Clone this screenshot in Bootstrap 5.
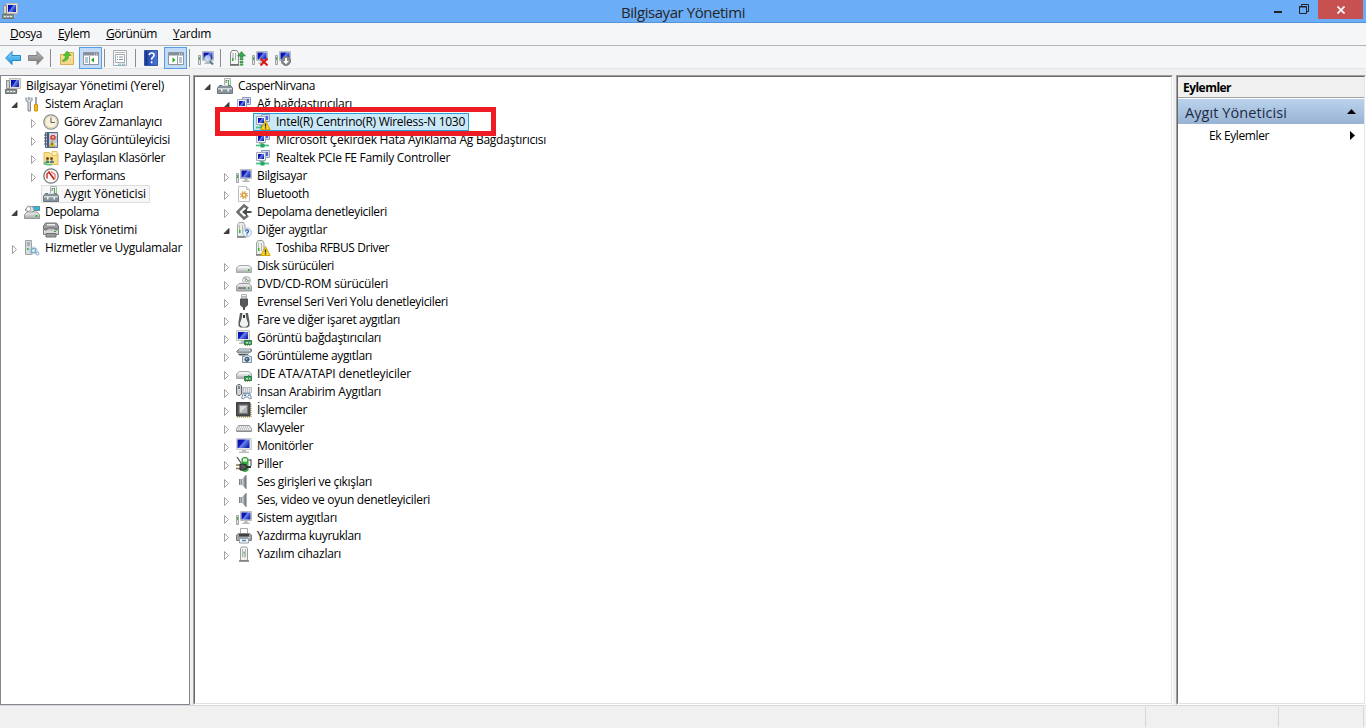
<!DOCTYPE html>
<html lang="tr">
<head>
<meta charset="utf-8">
<title>Bilgisayar Yönetimi</title>
<link href="https://cdn.jsdelivr.net/npm/bootstrap@5.3.0/dist/css/bootstrap.min.css" rel="stylesheet">
<style>
body{font-family:"Open Sans","Noto Sans",sans-serif;font-size:12px;line-height:18px;color:#000;background:#f0f0f0;height:728px;width:1366px}
svg{display:block;flex:none}
.fit{white-space:nowrap;display:inline-block}
.title-bar{height:23px;background:#6badf6;border-bottom:1px solid #5593d6}
.title-bar .caption{font-size:15px;line-height:24px;color:#262626;padding-left:621px}
.app-icon{left:2px;top:3px}
.win-min{width:8px;height:2px;background:#222;margin:11px 17px 0 0}
.win-restore{margin:4px 9px 0 0}
.win-close{width:45px;height:19px;background:#c75050;margin-right:3px}
.menu-bar{height:23px;background:#f5f6f7;border-bottom:1px solid #b1b4b9;padding-left:10px;gap:16px;line-height:22px}
.tool-bar{height:23px;background:#f5f6f7;border-bottom:1px solid #e4e7ea;padding:1px 0 0 5px}
.tool-sep{width:1px;height:18px;background:#8d8d8d}
.tool-toggle{width:23px;height:22px;background:#c2dcf7;border:1px solid #569de5}
.s2{margin-left:2px}.s4{margin-left:4px}.s5{margin-left:5px}.s6{margin-left:6px}.s7{margin-left:7px}.s8{margin-left:8px}.s9{margin-left:9px}
.work-area{height:636px;padding-top:6px}
.pane-tree{width:190px;height:630px;background:#fff;border:1px solid #828790;padding-top:1px}
.sunken{background:#fff;border:1px solid;border-color:#a0a0a0 #fff #fff #a0a0a0}
.sunken-in{border:1px solid;border-color:#696969 #e3e3e3 #e3e3e3 #696969;height:100%}
.pane-main{width:980px;height:630px;margin-left:3px}
.pane-actions{width:190px;height:630px;margin-left:3px}
.tree-row{height:18px}
.node{display:flex;align-items:center;height:18px;border:1px solid transparent;padding:0 2px 0 1px;gap:5px}
.twisty{width:10px;height:18px}
.pane-tree .tree-row{padding-left:8px}
.pane-tree .l0{padding-left:2px}
.pane-tree .l2{padding-left:27px}
.pane-tree .leaf{padding-left:40px}
.pane-main .tree-row{padding-left:7px}
.pane-main .l1{padding-left:26px}
.pane-main .leaf{padding-left:58px}
.twisty + .node{margin-left:3px}
.current{background:#f7f7f7;border-color:#dedede;padding-right:3px}
.picked{background:#cbe8f6;border-color:#26a0da;padding-right:3px}
.highlight{position:absolute;left:20px;top:30px;width:281px;height:29px;border:5px solid #ed1c24;z-index:2}
.act-head{height:21px;border-bottom:1px solid #a0a0a0;background:#f0f0f0;padding-left:5px;line-height:21px}
.act-title{height:25px;margin-top:1px;background:linear-gradient(#bad2ec,#98b3d3);padding:0 8px 0 7px;font-size:14.5px;color:#1e2b45}
.act-title .fit{padding-top:2px}
.act-link{height:23px;padding:0 9px 0 31px}
.status-bar{height:23px;border-top:1px solid #d7d7d7;padding-top:1px}
.status-bar i{width:1px;height:20px;background:#d7d7d7}
.cell-a{margin-left:1145px}.cell-b{margin-left:132px}.cell-c{margin-left:84px}
</style>
</head>
<body class="overflow-hidden d-flex flex-column m-0">
<svg width="0" height="0" class="position-absolute" aria-hidden="true">
<defs>
<linearGradient id="gScreen" x2="1" y2=".6"><stop offset="0" stop-color="#0508a0"/><stop offset=".45" stop-color="#101cc0"/><stop offset=".55" stop-color="#6a86ea"/><stop offset="1" stop-color="#1828b4"/></linearGradient>
<linearGradient id="gMetal" x2="0" y2="1"><stop offset="0" stop-color="#f4f4f4"/><stop offset="1" stop-color="#a4a6a8"/></linearGradient>
<linearGradient id="gBlue" x2="0" y2="1"><stop offset="0" stop-color="#8edcff"/><stop offset="1" stop-color="#1793dc"/></linearGradient>
<linearGradient id="gGrey" x2="0" y2="1"><stop offset="0" stop-color="#bdbdbd"/><stop offset="1" stop-color="#777"/></linearGradient>
<linearGradient id="gHelp" x2="1" y2="0"><stop offset="0" stop-color="#1d3a9c"/><stop offset="1" stop-color="#4a78dc"/></linearGradient>
<linearGradient id="gSpk" x2="1" y2="0"><stop offset="0" stop-color="#d5dade"/><stop offset="1" stop-color="#5e6a74"/></linearGradient>
<symbol id="open" viewBox="0 0 10 18"><path d="M8 7.500V12.500H3z" fill="#404040" stroke="#262626" stroke-width=".8"/></symbol>
<symbol id="shut" viewBox="0 0 10 18"><path d="M3.500 6.500v8l4-4z" fill="#fff" stroke="#a2a2a2"/></symbol>
<symbol id="pc" viewBox="0 0 16 16"><path d="M4.500.5h11v10h-11z" fill="#e2e0d8" stroke="#bebcb2"/><path d="M6 2h8v7H6z" fill="url(#gScreen)"/><path d="M8 11h4l1 3H9z" fill="#d0cec6"/><path d="M1.500 2.500h3v8h-3z" fill="#cfd4d2" stroke="#8b908e"/><path d="M.5 11.500h11v4H.5z" fill="#8f9696" stroke="#6c7373"/><path d="M2 13h2v1H2zM5 13h2v1H5zM8 13h2v1H8z" fill="#e8ecec"/></symbol>
<symbol id="devmgr" viewBox="0 0 16 16"><path d="M7.500.5h6v8h-6z" fill="#eef0ee" stroke="#b0b5b2"/><path d="M9 5V2.500h1.500" stroke="#777" fill="none"/><path d="M11 2h1v5h-1z" fill="#2fbb2f"/><path d="M.5 10 2.500 7.500h11l2 2.500v5.500H.5z" fill="#87939b" stroke="#6b767e"/><path d="M1 10h14v1.500H1z" fill="#d0d7db"/><path d="M5 7.500h6" stroke="#d5dce0"/><path d="M4 11h1.500v2.500H4zM10.500 11H12v2.500h-1.500z" fill="#f0f2f3"/></symbol>
<symbol id="tools" viewBox="0 0 16 16"><path d="M2 1.500v3.200L4 6v9h2.500V6L8 4.500V1.500M5 .8V4" fill="#d5d8da" stroke="#81878b"/><path d="M12 1v7" stroke="#7c858c" stroke-width="1.500"/><path d="M10.500 8.500h3v6.500h-3z" fill="#f5b81b" stroke="#cf9610"/></symbol>
<symbol id="clock" viewBox="0 0 16 16"><circle cx="8" cy="8" r="7.200" fill="#faf1d8" stroke="#8b9096" stroke-width="1.300"/><circle cx="8" cy="8" r="5.800" fill="none" stroke="#d7cfb6" stroke-width=".8"/><path d="M8 3.500V8.500h4" fill="none" stroke="#5d676f" stroke-width="1.100"/></symbol>
<symbol id="event" viewBox="0 0 16 16"><path d="M2.500.5h12v15h-12z" fill="#b9c8de" stroke="#5a6985"/><path d="M5 1v14" stroke="#415982" stroke-width="2"/><path d="M1 3h3M1 6h3M1 9h3M1 12h3" stroke="#4d4f52"/><path d="M7 3h7M7 12h7" stroke="#fff"/><circle cx="10" cy="5.500" r="2.700" fill="#d5432f"/><path d="M10 4v2M10 6.600v.7" stroke="#fff"/><path d="M6.500 14.500 9 9l3 5.500z" fill="#f8d433" stroke="#af8c19" stroke-width=".6"/><path d="M9 11v2.500" stroke="#222"/></symbol>
<symbol id="share" viewBox="0 0 16 16"><path d="M1 2.500h5l1.500 1H15v11H1z" fill="#f9e08a" stroke="#e0bc58"/><path d="M9 1.500h5v4H9z" fill="#fff1b5" stroke="#e5c76a"/><circle cx="4.500" cy="8.500" r="1.500" fill="#6b4423"/><circle cx="8.500" cy="8.500" r="1.500" fill="#704d2c"/><path d="M2.500 13q0-3.500 2.500-2.500 1.500 0 1.500 2.500zM7 13q0-3.500 2.500-2.500 1.500 0 1.500 2.500z" fill="#497c94"/><path d="M1 12.500q2 3 8 2" fill="none" stroke="#54c489" stroke-width="1.700"/></symbol>
<symbol id="perf" viewBox="0 0 16 16"><circle cx="8" cy="8" r="7.200" fill="#fafafa" stroke="#747a7e" stroke-width="1.300"/><path d="M4 10.500V6l2-2 5 7" fill="none" stroke="#d9342a" stroke-width="1.500"/><path d="M8 3.500l4 3V10.500l-2 1" fill="none" stroke="#e77870" stroke-width="1.300"/><path d="M6 4.500l5 7" stroke="#b01212"/></symbol>
<symbol id="storage" viewBox="0 0 16 16"><path d="M8 2.500h7.500v4H8z" fill="#37b4dc" stroke="#5d8e9c"/><path d="M1 6l3-4 5 1 1 4-4 2z" fill="#e7e9e9" stroke="#979b9b"/><circle cx="4.500" cy="5" r="2.300" fill="#fff" stroke="#aaa"/><path d="M.5 10.500 3 8h10l2.500 2.500v4H.5z" fill="url(#gMetal)" stroke="#929697"/><path d="M11.500 11h2v2h-2z" fill="#31bd31"/></symbol>
<symbol id="disk" viewBox="0 0 16 16"><path d="M.5 4 2.500 1h11l2 3v3H.5z" fill="#9b9d9d" stroke="#737777"/><path d="M4 2h8v1.500H4z" fill="#eee"/><path d="M.5 7.500h15v5H.5z" fill="#d9dada" stroke="#7a7d7d"/><path d="M2.500 8.500 5 6h6l2.500 2.500" fill="#bbb" stroke="#666"/><path d="M3 11.500h10v3.500H3z" fill="#9a9d9d" stroke="#707373"/><path d="M11 9h2v1h-2z" fill="#2bac2b"/></symbol>
<symbol id="service" viewBox="0 0 16 16"><path d="M1.500.5h6v14h-6z" fill="#d8dcde" stroke="#9ca3a6"/><path d="M3 3h3M3 5h3" stroke="#7b8285"/><path d="M3 8h1.500v2H3z" fill="#30b530"/><circle cx="9.500" cy="10.500" r="2.200" fill="#e7f1f8" stroke="#7fa9c5" stroke-width="1.400"/><circle cx="9.500" cy="10.500" r="3.600" fill="none" stroke="#91b6cf" stroke-dasharray="1.400 1.430"/><circle cx="13.500" cy="13.500" r="1.500" fill="#e7f1f8" stroke="#7fa9c5"/></symbol>
<symbol id="nets" viewBox="0 0 16 16"><path d="M6.500 1.500h8v7h-8z" fill="#d5dcec" stroke="#8f9cc0"/><path d="M8 3h5v4H8z" fill="#4a63da"/><path d="M1.500 3.500h9v8h-9z" fill="#f0f1f4" stroke="#a4abb8"/><path d="M3 5h6v5H3z" fill="url(#gScreen)"/><path d="M4 12h4v1H4z" fill="#b4b9bf"/></symbol>
<symbol id="net" viewBox="0 0 16 16"><use href="#nets" y="-1"/><path d="M1 13.500h13" stroke="#4cc48c" stroke-width="1.800"/><path d="M5.500 11.500h4v4h-4z" fill="#26a566"/></symbol>
<symbol id="warn" viewBox="0 0 16 16"><path d="M5.800 15.500 10.500 6.500l4.700 9z" fill="#ffd928" stroke="#d0a410"/><path d="M10.500 9.500v3M10.500 13.300v1.200" stroke="#222" stroke-width="1.300"/></symbol>
<symbol id="netwarn" viewBox="0 0 16 16"><use href="#net"/><use href="#warn"/></symbol>
<symbol id="comp" viewBox="0 0 16 16"><path d="M4.500 1.500h11v9h-11z" fill="#dcdee0" stroke="#b9bcbe"/><path d="M5.500 2.500h9v7h-9z" fill="url(#gScreen)"/><path d="M8.500 11h3v1.500h2V14h-7v-1.500h2z" fill="#b4b8ba"/><path d="M.5 5.500h2v9h-2z" fill="#dfe2e3" stroke="#9fa4a6"/><path d="M1 7h1v3H1z" fill="#37b937"/></symbol>
<symbol id="bt" viewBox="0 0 16 16"><path d="M2.500.5h8l3 3v12h-11z" fill="#fff" stroke="#bec0c2"/><path d="M10.500.5v3h3" fill="#e8e8e8" stroke="#bec0c2"/><circle cx="8" cy="9" r="2" fill="#fff1cf" stroke="#d89b3e" stroke-width="1.500"/><circle cx="8" cy="9" r="3.400" fill="none" stroke="#d69c48" stroke-width="1.200" stroke-dasharray="1.340 1.330"/></symbol>
<symbol id="stctl" viewBox="0 0 16 16"><path d="M12 4.500 8 1.500 1.500 8 8 14.500l4-3" fill="none" stroke="#6b6f70" stroke-width="2.600"/><path d="M7 8h8.500" stroke="#494d4e" stroke-width="2"/><path d="M11 4v8L6 8z" fill="#494d4e"/></symbol>
<symbol id="other" viewBox="0 0 16 16"><path d="M1.500 3 3 .5h4.500L9 3v11.500H1.500z" fill="#eceeec" stroke="#9da19e"/><path d="M3.500 3v7M6.500 3v8" stroke="#b5bab6"/><path d="M3 8h1.500v3H3z" fill="#31b531"/><path d="M1 15h9" stroke="#777" stroke-width="1.500"/></symbol>
<symbol id="unknown" viewBox="0 0 16 16"><use href="#other"/><circle cx="11" cy="10.500" r="4.400" fill="#eaf2fc" stroke="#a8b8cc"/><path d="M9.500 9.500q0-1.700 1.500-1.700t1.500 1.200-1.500 2v.7M11 12.500v1" fill="none" stroke="#2353b0" stroke-width="1.200"/></symbol>
<symbol id="unkwarn" viewBox="0 0 16 16"><use href="#other"/><use href="#warn"/></symbol>
<symbol id="drive" viewBox="0 0 16 16"><path d="M.5 10 3 7.500h10l2.500 2.500v4.500H.5z" fill="#c4c6c7" stroke="#a6aaac"/><path d="M1.500 10 3.500 8h9l2 2z" fill="#f4f4f4"/><path d="M1.500 10.500h13v3h-13z" fill="url(#gMetal)"/><path d="M12 11h1.500v2H12z" fill="#28b828"/></symbol>
<symbol id="dvd" viewBox="0 0 16 16"><circle cx="10.500" cy="4.500" r="4" fill="#e2e5e4" stroke="#b0b4b3"/><path d="M8 2l2.500 2.500L10 1zM13 6l-2.500-1.500L14 4" fill="#81b284"/><circle cx="10.500" cy="4.500" r="1" fill="#fff" stroke="#888"/><path d="M.5 10 3 7.500h10l2.500 2.500v5H.5z" fill="url(#gMetal)" stroke="#999c9e"/><path d="M2 12h8" stroke="#444"/><path d="M12 11h1.500v2H12z" fill="#28b828"/></symbol>
<symbol id="usb" viewBox="0 0 16 16"><path d="M5.500.5h5v5h-5z" fill="#f0f0f0" stroke="#b2b4b6"/><path d="M7 2v1.500M9 2v1.500" stroke="#777"/><path d="M4.500 5h7v6l-2 2h-3l-2-2z" fill="#55595c" stroke="#4e5153"/><path d="M8 13v3" stroke="#505355" stroke-width="2"/></symbol>
<symbol id="mouse" viewBox="0 0 16 16"><path d="M4 1h8l1.500 9v4l-2 1.500h-7l-2-1.500v-4z" fill="#595d60"/><path d="M6.500 1h3l1 6 1.500 4v2q-1 2-4 2t-4-2v-2l1.500-4z" fill="#f1f2f2"/><path d="M8 3v3" stroke="#333" stroke-width="2"/></symbol>
<symbol id="chip" viewBox="0 0 16 16"><path d="M8.500 10.500h7v4h-7z" fill="#34995c" stroke="#297b4a"/><path d="M10 12h2v1.500h-2zM13 12h1.500v1.500H13z" fill="#cbe0ba"/><path d="M9 15.500h6" stroke="#b39d36" stroke-dasharray="1 1"/></symbol>
<symbol id="video" viewBox="0 0 16 16"><path d="M.5.5h13v10H.5z" fill="#e8e7e2" stroke="#c4c3bd"/><path d="M2 2h10v7H2z" fill="url(#gScreen)"/><path d="M5 11h4v1.500h1V14H3v-1.500h2z" fill="#b7b8b8"/><use href="#chip"/></symbol>
<symbol id="imaging" viewBox="0 0 16 16"><path d="M.5 3.500 3 1h12.500v2.500L13 5H2z" fill="#9ba7ac" stroke="#7b878d"/><path d="M3 2h11" stroke="#dfe8eb"/><path d="M2 6h10v1.500H3.500z" fill="#4c5458"/><path d="M6.500 8.500h2l1-1.500h3l1 1.500h2v6h-9z" fill="#dfe6ec" stroke="#7f93a6"/><circle cx="11" cy="11.300" r="2.100" fill="#46709a" stroke="#39526a"/><circle cx="10.500" cy="10.800" r=".8" fill="#bcdcf5"/></symbol>
<symbol id="ide" viewBox="0 0 16 16"><use href="#drive" y="-2"/><use href="#chip"/></symbol>
<symbol id="hid" viewBox="0 0 16 16"><path d="M6 3.500h9.500v5H6z" fill="#e6e8eb" stroke="#b7bcc3"/><path d="M7 5h8M7 7h8" stroke="#959ba2" stroke-dasharray="1 1"/><path d="M.5 2 2 .5h2L5.500 2v8L4 11.500H2L.5 10z" fill="#d0d4d8" stroke="#60656a"/><path d="M3 2v3" stroke="#333"/><path d="M7 9.500h7l1.500 5-2 .5-1.500-2H9L7.500 15l-2-.5z" fill="#e7ebf0" stroke="#8494a4"/><path d="M8 10.500h2V12H8z" fill="#487fbd"/><path d="M12 10.500h1.500V12H12z" fill="#3da4dc"/></symbol>
<symbol id="cpu" viewBox="0 0 16 16"><path d="M15 2v13M1 15h14" stroke="#c8a74c" stroke-width="1.500" stroke-dasharray="1 1"/><path d="M.5.5h13.500v13.500H.5z" fill="#4b4d4f" stroke="#3c3e40"/><path d="M3 3h8.500v8.500H3z" fill="#b0b3b6" stroke="#757779"/><path d="M4 4h7L4 11z" fill="#d7d9db"/></symbol>
<symbol id="keyb" viewBox="0 0 16 16"><path d="M2.500 5.500h11l2 3.500v2.500H.5V9z" fill="#eceef0" stroke="#989da1"/><path d="M3 7h10.500M2 9h12" stroke="#959a9e" stroke-dasharray="1 1"/><path d="M1 11h14" stroke="#777d82"/></symbol>
<symbol id="mon" viewBox="0 0 16 16"><path d="M.5.5h15v11H.5z" fill="#e8e8e6" stroke="#cdcecd"/><path d="M1.500 1.500h12v8.500h-12z" fill="url(#gScreen)"/><path d="M6 12h4v1.500h3V15H3v-1.500h3z" fill="#bcbfc0"/></symbol>
<symbol id="batt" viewBox="0 0 16 16"><path d="M6 2.500q3-2.500 6 0v12q-3 2-6 0z" fill="#33b53b" stroke="#379d40"/><path d="M7 2.500h4v3H7z" fill="#eef8ec"/><path d="M12.500 4h2.500v6" fill="none" stroke="#65696b" stroke-width="1.300"/><path d="M1 1l4 6" stroke="#555" stroke-width="1.300"/><path d="M0 9h4M0 12.500h4" stroke="#8a764a" stroke-width="1.500"/><path d="M4 8h3q4 0 4 3t-4 3H4z" fill="#54585a" stroke="#242728"/><path d="M11 11h4" stroke="#333" stroke-width="2"/></symbol>
<symbol id="spk" viewBox="0 0 16 16"><path d="M3 5h4v6H3z" fill="#77838c"/><path d="M6 5l4-4v14l-4-4z" fill="url(#gSpk)"/><path d="M10.300 1v14" stroke="#9aa2a8"/><path d="M4.800 5v6" stroke="#c9ced1"/></symbol>
<symbol id="print" viewBox="0 0 16 16"><path d="M4.500.5h7v6h-7z" fill="#fff" stroke="#aaa"/><path d="M.5 7 2.500 5.500h11L15.500 7v5.500H.5z" fill="#9fa4a6" stroke="#7d8183"/><path d="M3 6h10v2.500H3z" fill="#3d4143"/><path d="M3.500 10.500h9v4.500h-9z" fill="#f4f7fa" stroke="#9b9fa1"/><path d="M6 12.500h4" stroke="#3b8bc9" stroke-width="1.500"/><path d="M12 9.500h2" stroke="#d6d8d9"/></symbol>
<symbol id="soft" viewBox="0 0 16 16"><path d="M4.500 2.500 5.500 1h5l1 1.500v12h-7z" fill="#f0f2f0" stroke="#989c9a"/><path d="M6.500 3v8M9.500 3v8" stroke="#b2b7b3"/><path d="M7.500 6.500h1.500v5H7.500z" fill="#bfc4c0"/><path d="M7.500 5.500h1v2h-1z" fill="#2db52d"/><path d="M3 15h10" stroke="#777" stroke-width="1.500"/></symbol>
<symbol id="back" viewBox="0 0 16 16"><path d="M.7 8 7 1.500V5.500h8.500v5H7v4z" fill="url(#gBlue)" stroke="#2888c5"/></symbol>
<symbol id="fwd" viewBox="0 0 16 16"><path d="M15.300 8 9 1.500V5.500H.5v5H9v4z" fill="url(#gGrey)" stroke="#838383"/></symbol>
<symbol id="up" viewBox="0 0 16 16"><path d="M1.500 4.500H6l1-2h7.500v12h-13z" fill="#f5d78c" stroke="#d8ae55"/><path d="M2 7h12" stroke="#fbe9b6"/><path d="M3.500 10.500q3-1 3-5H4.500L8.200 1 12 5.500H9.700q0 5.500-6.200 6z" fill="#50c52d" stroke="#3c9e2a" stroke-width=".6"/></symbol>
<symbol id="paneL" viewBox="0 0 16 16"><path d="M.5 2.500h15v12H.5z" fill="#fff" stroke="#8c959f"/><path d="M1 3h14v2.500H1z" fill="#848d98"/><path d="M11 3.500h1v1h-1zM13 3.500h1v1h-1z" fill="#fff"/><path d="M6.500 6v8" stroke="#929aa3"/><path d="M2 8h3M2 10h3M2 12h3" stroke="#6d8dae"/><path d="M11 7.500v5L8 10z" fill="#27a51e"/></symbol>
<symbol id="paneR" viewBox="0 0 16 16"><path d="M.5 2.500h15v12H.5z" fill="#fff" stroke="#8c959f"/><path d="M1 3h14v2.500H1z" fill="#848d98"/><path d="M11 3.500h1v1h-1zM13 3.500h1v1h-1z" fill="#fff"/><path d="M9.500 6v8" stroke="#929aa3"/><path d="M11 8h3M11 10h3M11 12h3" stroke="#6d8dae"/><path d="M4.500 7.500v5L7.500 10z" fill="#27a51e"/></symbol>
<symbol id="props" viewBox="0 0 16 16"><path d="M1.500.5h13v15h-13z" fill="#f6f7f8" stroke="#a9adb1"/><path d="M3 2.500h10" stroke="#b4b9be"/><path d="M3.500 4.500h9v8h-9z" fill="#fff" stroke="#a7acb1"/><path d="M5 7h1M5 9.500h1" stroke="#1b8ccb" stroke-width="1.200"/><path d="M7 7h4M7 9.500h4" stroke="#8d9296"/><path d="M6 14.200h3M10 14.200h3" stroke="#64b7d8"/></symbol>
<symbol id="help" viewBox="0 0 16 16"><path d="M1.500.5h13v15h-13z" fill="url(#gHelp)" stroke="#3454a8"/><path d="M3.500 1v14" stroke="#15307e"/><path d="M6.200 5.200q.2-2.200 2.600-2.200t2.200 2.200q0 1.300-1.400 2.200Q8.600 8 8.600 9.800M8.600 11.300v2" fill="none" stroke="#fff" stroke-width="1.700"/></symbol>
<symbol id="scan" viewBox="0 0 16 16"><use href="#comp"/><circle cx="9.500" cy="8.500" r="3" fill="#d8edfb" fill-opacity=".75" stroke="#a9bccb"/><path d="M11.800 11 15 14.500" stroke="#5c7c94" stroke-width="2"/></symbol>
<symbol id="upd" viewBox="0 0 16 16"><path d="M.5 3 2 .5h5L8.500 3v11.500h-8z" fill="#f5f5f5" stroke="#878b88"/><path d="M3 3v7M5.500 3v7" stroke="#aaa"/><path d="M2 8h1.500v3H2z" fill="#2fb52f"/><path d="M0 15h9" stroke="#666" stroke-width="1.500"/><path d="M11.500 1.500 15.500 6H13v1.500h-3V6H7.500zM10 8.500h3V10h-3zM10 11.500h3V13h-3zM10 14.200h3v1h-3z" fill="#3aa54c" stroke="#2f8b42" stroke-width=".6"/></symbol>
<symbol id="unin" viewBox="0 0 16 16"><use href="#comp"/><path d="M8.500 8.500l7 7M15.500 8.500l-7 7" stroke="#e01818" stroke-width="2"/></symbol>
<symbol id="disab" viewBox="0 0 16 16"><use href="#comp"/><circle cx="11" cy="11" r="4.500" fill="#868a8d" stroke="#777a7d"/><path d="M10 8h2v3h2l-3 3.200L8 11h2z" fill="#fff"/></symbol>
</defs>
</svg>

<header class="title-bar d-flex align-items-start position-relative">
  <svg width="16" height="16" class="app-icon position-absolute"><use href="#pc"/></svg>
  <div class="caption"><span class="fit" data-w="124">Bilgisayar Yönetimi</span></div>
  <div class="d-flex ms-auto">
    <div class="win-min"></div>
    <svg class="win-restore" width="10" height="10" viewBox="0 0 10 10"><path d="M2.500 2V.5h7v7H8M.5 2.500h7v7h-7z" fill="none" stroke="#222"/><path d="M0 3h8" stroke="#222"/></svg>
    <div class="win-close d-flex align-items-center justify-content-center"><svg width="8" height="8" viewBox="0 0 8 8"><path d="M.5.5l7 7M7.500.5l-7 7" stroke="#fff" stroke-width="1.700"/></svg></div>
  </div>
</header>
<nav class="menu-bar d-flex">
  <span class="fit" data-w="32"><u>D</u>osya</span><span class="fit" data-w="32"><u>E</u>ylem</span><span class="fit" data-w="51"><u>G</u>örünüm</span><span class="fit" data-w="38"><u>Y</u>ardım</span>
</nav>
<div class="tool-bar d-flex align-items-center">
  <svg width="16" height="16"><use href="#back"/></svg>
  <svg class="s7" width="16" height="16"><use href="#fwd"/></svg>
  <div class="tool-sep s6"></div>
  <svg class="s8" width="16" height="16"><use href="#up"/></svg>
  <div class="tool-toggle s4 d-flex align-items-center justify-content-center"><svg width="16" height="16"><use href="#paneL"/></svg></div>
  <div class="tool-sep s2"></div>
  <svg class="s7" width="16" height="16"><use href="#props"/></svg>
  <div class="tool-sep s7"></div>
  <svg class="s7" width="16" height="16"><use href="#help"/></svg>
  <div class="tool-toggle s5 d-flex align-items-center justify-content-center"><svg width="16" height="16"><use href="#paneR"/></svg></div>
  <div class="tool-sep s2"></div>
  <svg class="s8" width="16" height="16"><use href="#scan"/></svg>
  <div class="tool-sep s6"></div>
  <svg class="s9" width="16" height="16"><use href="#upd"/></svg>
  <svg class="s6" width="16" height="16"><use href="#unin"/></svg>
  <svg class="s7" width="16" height="16"><use href="#disab"/></svg>
</div>

<main class="work-area d-flex align-items-start">
  <ul class="pane-tree list-unstyled mb-0">
    <li class="tree-row l0 d-flex"><div class="node"><svg width="16" height="16"><use href="#pc"/></svg><span class="fit" data-w="138">Bilgisayar Yönetimi (Yerel)</span></div></li>
    <li class="tree-row l1 d-flex"><svg class="twisty"><use href="#open"/></svg><div class="node"><svg width="16" height="16"><use href="#tools"/></svg><span class="fit" data-w="78">Sistem Araçları</span></div></li>
    <li class="tree-row l2 d-flex"><svg class="twisty"><use href="#shut"/></svg><div class="node"><svg width="16" height="16"><use href="#clock"/></svg><span class="fit" data-w="98">Görev Zamanlayıcı</span></div></li>
    <li class="tree-row l2 d-flex"><svg class="twisty"><use href="#shut"/></svg><div class="node"><svg width="16" height="16"><use href="#event"/></svg><span class="fit" data-w="106">Olay Görüntüleyicisi</span></div></li>
    <li class="tree-row l2 d-flex"><svg class="twisty"><use href="#shut"/></svg><div class="node"><svg width="16" height="16"><use href="#share"/></svg><span class="fit" data-w="101">Paylaşılan Klasörler</span></div></li>
    <li class="tree-row l2 d-flex"><svg class="twisty"><use href="#shut"/></svg><div class="node"><svg width="16" height="16"><use href="#perf"/></svg><span class="fit" data-w="61">Performans</span></div></li>
    <li class="tree-row leaf d-flex"><div class="node current"><svg width="16" height="16"><use href="#devmgr"/></svg><span class="fit" data-w="82">Aygıt Yöneticisi</span></div></li>
    <li class="tree-row l1 d-flex"><svg class="twisty"><use href="#open"/></svg><div class="node"><svg width="16" height="16"><use href="#storage"/></svg><span class="fit" data-w="54">Depolama</span></div></li>
    <li class="tree-row leaf d-flex"><div class="node"><svg width="16" height="16"><use href="#disk"/></svg><span class="fit" data-w="73">Disk Yönetimi</span></div></li>
    <li class="tree-row l1 d-flex"><svg class="twisty"><use href="#shut"/></svg><div class="node"><svg width="16" height="16"><use href="#service"/></svg><span class="fit" data-w="137">Hizmetler ve Uygulamalar</span></div></li>
  </ul>

  <section class="pane-main sunken">
    <div class="sunken-in position-relative">
      <div class="highlight"></div>
      <ul class="list-unstyled mb-0">
        <li class="tree-row d-flex"><svg class="twisty"><use href="#open"/></svg><div class="node"><svg width="16" height="16"><use href="#devmgr"/></svg><span class="fit" data-w="77">CasperNirvana</span></div></li>
        <li class="tree-row l1 d-flex"><svg class="twisty"><use href="#open"/></svg><div class="node"><svg width="16" height="16"><use href="#nets"/></svg><span class="fit" data-w="95">Ağ bağdaştırıcıları</span></div></li>
        <li class="tree-row leaf d-flex"><div class="node picked"><svg width="16" height="16"><use href="#netwarn"/></svg><span class="fit" data-w="189">Intel(R) Centrino(R) Wireless-N 1030</span></div></li>
        <li class="tree-row leaf d-flex"><div class="node"><svg width="16" height="16"><use href="#net"/></svg><span class="fit" data-w="270">Microsoft Çekirdek Hata Ayıklama Ağ Bağdaştırıcısı</span></div></li>
        <li class="tree-row leaf d-flex"><div class="node"><svg width="16" height="16"><use href="#net"/></svg><span class="fit" data-w="174">Realtek PCIe FE Family Controller</span></div></li>
        <li class="tree-row l1 d-flex"><svg class="twisty"><use href="#shut"/></svg><div class="node"><svg width="16" height="16"><use href="#comp"/></svg><span class="fit" data-w="50">Bilgisayar</span></div></li>
        <li class="tree-row l1 d-flex"><svg class="twisty"><use href="#shut"/></svg><div class="node"><svg width="16" height="16"><use href="#bt"/></svg><span class="fit" data-w="52">Bluetooth</span></div></li>
        <li class="tree-row l1 d-flex"><svg class="twisty"><use href="#shut"/></svg><div class="node"><svg width="16" height="16"><use href="#stctl"/></svg><span class="fit" data-w="130">Depolama denetleyicileri</span></div></li>
        <li class="tree-row l1 d-flex"><svg class="twisty"><use href="#open"/></svg><div class="node"><svg width="16" height="16"><use href="#unknown"/></svg><span class="fit" data-w="70">Diğer aygıtlar</span></div></li>
        <li class="tree-row leaf d-flex"><div class="node"><svg width="16" height="16"><use href="#unkwarn"/></svg><span class="fit" data-w="113">Toshiba RFBUS Driver</span></div></li>
        <li class="tree-row l1 d-flex"><svg class="twisty"><use href="#shut"/></svg><div class="node"><svg width="16" height="16"><use href="#drive"/></svg><span class="fit" data-w="77">Disk sürücüleri</span></div></li>
        <li class="tree-row l1 d-flex"><svg class="twisty"><use href="#shut"/></svg><div class="node"><svg width="16" height="16"><use href="#dvd"/></svg><span class="fit" data-w="131">DVD/CD-ROM sürücüleri</span></div></li>
        <li class="tree-row l1 d-flex"><svg class="twisty"><use href="#shut"/></svg><div class="node"><svg width="16" height="16"><use href="#usb"/></svg><span class="fit" data-w="191">Evrensel Seri Veri Yolu denetleyicileri</span></div></li>
        <li class="tree-row l1 d-flex"><svg class="twisty"><use href="#shut"/></svg><div class="node"><svg width="16" height="16"><use href="#mouse"/></svg><span class="fit" data-w="143">Fare ve diğer işaret aygıtları</span></div></li>
        <li class="tree-row l1 d-flex"><svg class="twisty"><use href="#shut"/></svg><div class="node"><svg width="16" height="16"><use href="#video"/></svg><span class="fit" data-w="124">Görüntü bağdaştırıcıları</span></div></li>
        <li class="tree-row l1 d-flex"><svg class="twisty"><use href="#shut"/></svg><div class="node"><svg width="16" height="16"><use href="#imaging"/></svg><span class="fit" data-w="115">Görüntüleme aygıtları</span></div></li>
        <li class="tree-row l1 d-flex"><svg class="twisty"><use href="#shut"/></svg><div class="node"><svg width="16" height="16"><use href="#ide"/></svg><span class="fit" data-w="154">IDE ATA/ATAPI denetleyiciler</span></div></li>
        <li class="tree-row l1 d-flex"><svg class="twisty"><use href="#shut"/></svg><div class="node"><svg width="16" height="16"><use href="#hid"/></svg><span class="fit" data-w="124">İnsan Arabirim Aygıtları</span></div></li>
        <li class="tree-row l1 d-flex"><svg class="twisty"><use href="#shut"/></svg><div class="node"><svg width="16" height="16"><use href="#cpu"/></svg><span class="fit" data-w="50">İşlemciler</span></div></li>
        <li class="tree-row l1 d-flex"><svg class="twisty"><use href="#shut"/></svg><div class="node"><svg width="16" height="16"><use href="#keyb"/></svg><span class="fit" data-w="47">Klavyeler</span></div></li>
        <li class="tree-row l1 d-flex"><svg class="twisty"><use href="#shut"/></svg><div class="node"><svg width="16" height="16"><use href="#mon"/></svg><span class="fit" data-w="56">Monitörler</span></div></li>
        <li class="tree-row l1 d-flex"><svg class="twisty"><use href="#shut"/></svg><div class="node"><svg width="16" height="16"><use href="#batt"/></svg><span class="fit" data-w="26">Piller</span></div></li>
        <li class="tree-row l1 d-flex"><svg class="twisty"><use href="#shut"/></svg><div class="node"><svg width="16" height="16"><use href="#spk"/></svg><span class="fit" data-w="115">Ses girişleri ve çıkışları</span></div></li>
        <li class="tree-row l1 d-flex"><svg class="twisty"><use href="#shut"/></svg><div class="node"><svg width="16" height="16"><use href="#spk"/></svg><span class="fit" data-w="173">Ses, video ve oyun denetleyicileri</span></div></li>
        <li class="tree-row l1 d-flex"><svg class="twisty"><use href="#shut"/></svg><div class="node"><svg width="16" height="16"><use href="#comp"/></svg><span class="fit" data-w="80">Sistem aygıtları</span></div></li>
        <li class="tree-row l1 d-flex"><svg class="twisty"><use href="#shut"/></svg><div class="node"><svg width="16" height="16"><use href="#print"/></svg><span class="fit" data-w="104">Yazdırma kuyrukları</span></div></li>
        <li class="tree-row l1 d-flex"><svg class="twisty"><use href="#shut"/></svg><div class="node"><svg width="16" height="16"><use href="#soft"/></svg><span class="fit" data-w="84">Yazılım cihazları</span></div></li>
      </ul>
    </div>
  </section>

  <aside class="pane-actions sunken">
    <div class="sunken-in">
      <div class="act-head fw-bold"><span class="fit" data-w="48">Eylemler</span></div>
      <div class="act-title d-flex align-items-center justify-content-between"><span class="fit" data-w="102">Aygıt Yöneticisi</span><svg width="9" height="5" viewBox="0 0 9 5"><path d="M0 5 4.500 0 9 5z"/></svg></div>
      <div class="act-link d-flex align-items-center justify-content-between"><span class="fit" data-w="60">Ek Eylemler</span><svg width="5" height="9" viewBox="0 0 5 9"><path d="M0 0l5 4.500L0 9z"/></svg></div>
    </div>
  </aside>
</main>
<footer class="status-bar d-flex"><i class="cell-a"></i><i class="cell-b"></i><i class="cell-c"></i></footer>

<script src="https://cdn.jsdelivr.net/npm/bootstrap@5.3.0/dist/js/bootstrap.bundle.min.js"></script>
<script>
document.querySelectorAll('.fit').forEach(function (el) {
  var w = +el.dataset.w, n = el.textContent.length;
  el.style.letterSpacing = ((w - el.getBoundingClientRect().width) / n).toFixed(3) + 'px';
});
</script>
</body>
</html>
